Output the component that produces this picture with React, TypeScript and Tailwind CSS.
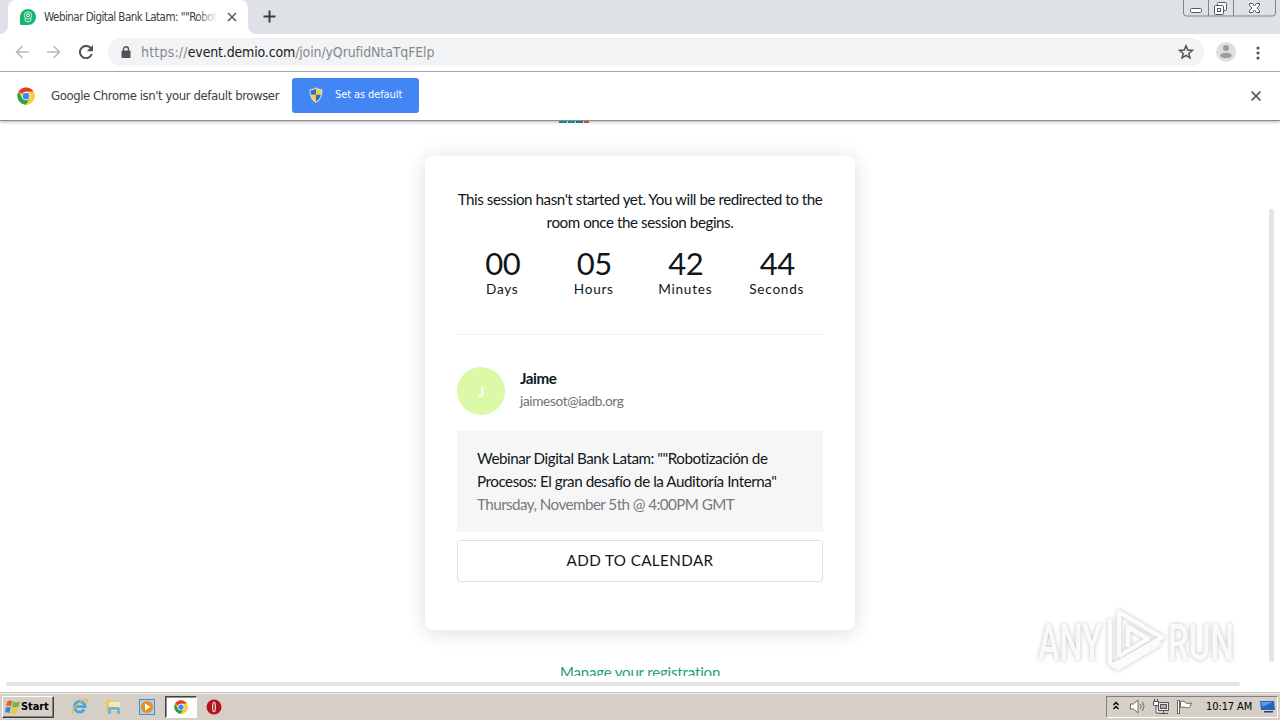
import type { ReactNode } from 'react';

const countdown = [
  { value: '00', label: 'Days' },
  { value: '05', label: 'Hours' },
  { value: '42', label: 'Minutes' },
  { value: '44', label: 'Seconds' },
];

function ChromeLogo({ className }: { className?: string }) {
  return (
    <svg className={className} viewBox="0 0 48 48">
      <circle cx="24" cy="24" r="23" fill="#fbc116" />
      <path d="M24 24 4.1 12.5A23 23 0 0 1 43.9 12.5H24z" fill="#e33b2e" />
      <path d="M4.1 12.5A23 23 0 0 0 24 47l10-17.3L24 24 14 29.7z" fill="#2aa24c" />
      <path d="M24 47A23 23 0 0 0 43.9 12.5H24L34 29.7z" fill="#fccd3a" />
      <circle cx="24" cy="24" r="11.5" fill="#fff" />
      <circle cx="24" cy="24" r="9" fill="#4285f4" />
    </svg>
  );
}

function ShieldIcon() {
  return (
    <svg className="w-[14px] h-[16px]" viewBox="0 0 14 16">
      <path d="M7 .3C5 1.800 3 2.300.5 2.300.5 8.500 1.800 13.200 7 15.800c5.200-2.600 6.500-7.300 6.500-13.500C11 2.300 9 1.800 7 .3z" fill="#d9dcd6" />
      <path d="M7 1.500C5.300 2.800 3.500 3.300 1.600 3.400c0 1.600.1 2.900.5 4.400H7z" fill="#2a6fc0" />
      <path d="M7 1.500c1.700 1.300 3.500 1.800 5.400 1.900 0 1.600-.1 2.900-.5 4.400H7z" fill="#f6cf33" />
      <path d="M2.100 7.800H7v6.700c-2.700-1.400-4.200-3.700-4.900-6.700z" fill="#f6cf33" />
      <path d="M11.900 7.800H7v6.700c2.700-1.400 4.200-3.700 4.900-6.700z" fill="#2a6fc0" />
    </svg>
  );
}

function TabStrip() {
  return (
    <div className="relative flex h-[34px] shrink-0 bg-[#dee1e6]">
      <div className="flex ml-[8px] w-[240px] h-[34px] items-center rounded-t-[8px] bg-white pl-[12px]">
        <svg className="w-4 h-4 shrink-0" viewBox="0 0 16 16">
          <path d="M8 0a8 8 0 1 1 0 16H1.500A1.500 1.500 0 0 1 0 14.500V8a8 8 0 0 1 8-8z" fill="#15b573" />
          <circle cx="8" cy="6.500" r="3.700" fill="none" stroke="#c5f0dd" strokeWidth="1" />
          <circle cx="8" cy="6.300" r="1.500" fill="none" stroke="#fff" strokeWidth="1" />
          <path d="M5.500 9.200c-3 4.800 8 4.800 5 0" fill="none" stroke="#e5f8f0" strokeWidth="1" />
        </svg>
        <div className="relative ml-[8px] w-[174px] overflow-hidden whitespace-nowrap pt-[1px] text-[11.5px] tracking-[-0.52px] text-[#3c4043]">
          Webinar Digital Bank Latam: ""Robot
          <div className="absolute inset-y-0 right-0 w-[22px] bg-gradient-to-r from-transparent to-white" />
        </div>
        <svg className="ml-[9px] w-[10px] h-[10px]" viewBox="0 0 10 10" stroke="#5f6368" strokeWidth="1.700">
          <path d="M1 1l8 8M9 1l-8 8" />
        </svg>
      </div>
      <svg className="ml-[15px] mt-[10px] w-[13px] h-[13px]" viewBox="0 0 13 13" stroke="#3c4043" strokeWidth="2">
        <path d="M6.500 .5v12M.5 6.500h12" />
      </svg>
      {/* corner flares of the active tab */}
      <svg className="absolute left-0 bottom-0 w-2 h-2" viewBox="0 0 8 8"><path d="M8 0v8H0a8 8 0 0 0 8-8z" fill="#fff" /></svg>
      <svg className="absolute left-[248px] bottom-0 w-2 h-2" viewBox="0 0 8 8"><path d="M0 0v8h8a8 8 0 0 1-8-8z" fill="#fff" /></svg>
      <svg className="absolute left-[1183px] top-0 w-[93px] h-[17px]" viewBox="0 0 93 17" fill="none" stroke="#7c8390">
        <path d="M.5 0v13a3 3 0 0 0 3 3h86a3 3 0 0 0 3-3V0M25.500 0v16M50.500 0v16" />
        <g stroke="#535966">
          <rect x="7.500" y="8.500" width="11" height="4" rx="1" fill="#fff" />
          <rect x="34.500" y="2.500" width="9" height="8" rx="1" fill="#fff" />
          <rect x="31.500" y="5.500" width="9" height="9" rx="1" fill="#fff" />
          <rect x="34.500" y="8.500" width="3" height="3" />
          <path d="M66.500 3.500h3l2 2.500 2-2.500h3v2L74 8l2.500 2.500v2h-3l-2-2.500-2 2.500h-3v-2L69 8l-2.500-2.500z" fill="#fff" />
        </g>
      </svg>
    </div>
  );
}

function Toolbar() {
  return (
    <div className="flex h-[38px] shrink-0 items-center border-b border-[#b0b2b4] bg-white">
      <svg className="ml-[15px] mb-[2px] w-[14px] h-[14px]" viewBox="0 0 14 14" fill="none" stroke="#b9bbbe" strokeWidth="1.700">
        <path d="M14 7H1.500M7.500 1l-6 6 6 6" />
      </svg>
      <svg className="ml-[18px] mb-[2px] w-[14px] h-[14px]" viewBox="0 0 14 14" fill="none" stroke="#b9bbbe" strokeWidth="1.700">
        <path d="M0 7h12.500M6.500 1l6 6-6 6" />
      </svg>
      <svg className="ml-[18px] mb-[2px] w-[14px] h-[14px]" viewBox="0 0 14 14">
        <path d="M11.800 3.200A6.100 6.100 0 1 0 12.800 9" fill="none" stroke="#505357" strokeWidth="2" />
        <path d="M14 0v6.200H7.800z" fill="#505357" />
      </svg>
      <div className="ml-[15px] mb-[1px] flex h-[28px] w-[1096px] items-center rounded-full bg-[#f1f3f4]">
        <svg className="ml-[13px] w-[10px] h-[12px]" viewBox="0 0 10 12">
          <path d="M2.500 5V3.200a2.500 2.500 0 0 1 5 0V5" fill="none" stroke="#505357" strokeWidth="1.400" />
          <rect x="0.500" y="4.500" width="9" height="7.500" rx="1" fill="#505357" />
        </svg>
        <div className="ml-[10px] whitespace-nowrap font-light text-[14px] text-[#85898e]">
          <span className="tracking-[0.2px]">https://</span>
          <span className="font-normal tracking-[-0.16px] text-[#202124]">event.demio.com</span>
          <span className="tracking-[-0.13px]">/join/yQrufidNtaTqFElp</span>
        </div>
        <svg className="ml-auto mr-[10px] w-4 h-4" viewBox="0 0 24 24" fill="none" stroke="#505357" strokeWidth="2.300">
          <path d="M12 2.800l2.600 6.400 6.900.5-5.300 4.500 1.700 6.700L12 17.200l-5.900 3.700 1.700-6.700L2.500 9.700l6.900-.5z" />
        </svg>
      </div>
      <svg className="ml-[12px] mb-[2px] w-5 h-5" viewBox="0 0 20 20">
        <circle cx="10" cy="10" r="10" fill="#dedfe1" />
        <circle cx="10" cy="6" r="3" fill="#9b9da0" />
        <ellipse cx="10" cy="13.500" rx="5.700" ry="2.800" fill="#9b9da0" />
      </svg>
      <svg className="ml-[20px] w-1 h-[14px]" viewBox="0 0 4 14" fill="#505357">
        <circle cx="2" cy="2" r="1.600" /><circle cx="2" cy="7" r="1.600" /><circle cx="2" cy="12" r="1.600" />
      </svg>
    </div>
  );
}

function InfoBar() {
  return (
    <div className="relative z-10 flex h-[49px] shrink-0 items-center border-b border-[#8e8e8e] bg-white shadow-[0_1px_3px_rgba(0,0,0,0.3)]">
      <ChromeLogo className="ml-[17px] w-[18px] h-[18px]" />
      <span className="ml-[16px] w-[241px] whitespace-nowrap text-[13px] tracking-[-0.41px] text-[#3c4043]">Google Chrome isn't your default browser</span>
      <button className="mb-[2px] flex h-[35px] w-[127px] items-center rounded-[3px] bg-[#4285f4] pl-[17px] text-[11px] text-white">
        <ShieldIcon />
        <span className="ml-[12px] whitespace-nowrap pt-[1px] tracking-[-0.1px]">Set as default</span>
      </button>
      <svg className="ml-auto mr-[19px] w-[10px] h-[10px]" viewBox="0 0 10 10" stroke="#5f6368" strokeWidth="1.900">
        <path d="M.5 .5l9 9M9.500 .5l-9 9" />
      </svg>
    </div>
  );
}

function Watermark() {
  return (
    <svg className="absolute left-[1034px] top-[486px] w-[204px] h-[66px] drop-shadow-[0_0_2px_rgba(0,0,0,0.24)]" viewBox="0 0 204 66">
      <g fill="#fafafa" fontFamily="Roboto, sans-serif" fontSize="50" fontWeight="500">
        <text x="4" y="53" textLength="64" lengthAdjust="spacingAndGlyphs">ANY</text>
        <text x="134" y="53" textLength="66" lengthAdjust="spacingAndGlyphs">RUN</text>
      </g>
      <g fill="none" stroke="#fbfbfb" strokeWidth="4.500" strokeLinejoin="round">
        <path d="M85 50V5l43 25.500L80 58M94 40V20l20 12-29 17M76 12v44l8 5 43-25" />
      </g>
    </svg>
  );
}

function SessionCard() {
  return (
    <div className="h-[474px] w-[430px] rounded-[8px] bg-white px-[32px] pt-[32px] text-[15.2px] leading-[23px] tracking-[-0.45px] text-[#10161a] shadow-[0_2px_20px_rgba(0,0,0,0.14)]">
      <p className="text-center whitespace-nowrap">
        This session hasn't started yet. You will be redirected to the
        <br />
        room once the session begins.
      </p>
      <div className="mt-[11px] grid grid-cols-4 text-center">
        {countdown.map((item) => (
          <div key={item.label}>
            <div className="text-[31px] leading-[36px] tracking-[-0.6px]">{item.value}</div>
            <div className="-ml-[1px] pt-[1px] text-[13.6px] leading-[15px] tracking-[0.75px]">{item.label}</div>
          </div>
        ))}
      </div>
      <div className="mt-[37px] border-t border-[#f1f2f3]" />
      <div className="mt-[32px] flex h-[48px]">
        <div className="flex h-[48px] w-[48px] items-center justify-center rounded-full bg-[#dcf9a8] text-[14px] font-bold text-white">J</div>
        <div className="ml-[15px]">
          <div className="font-bold leading-[23px]">Jaime</div>
          <div className="text-[13.6px] leading-[22px] tracking-[-0.35px] text-[#6c7277]">jaimesot@iadb.org</div>
        </div>
      </div>
      <div className="mt-[16px] h-[101px] bg-[#f6f6f7] px-[20px] pt-[16px]">
        <p className="whitespace-nowrap">
          Webinar Digital Bank Latam: ""Robotización de
          <br />
          Procesos: El gran desafío de la Auditoría Interna"
        </p>
        <p className="whitespace-nowrap tracking-[-0.55px] text-[#747a80]">Thursday, November 5th @ 4:00PM GMT</p>
      </div>
      <button className="mt-[8px] h-[42px] w-full rounded-[4px] border border-[#dfe0e3] pb-[2px] tracking-[0.4px]">ADD TO CALENDAR</button>
    </div>
  );
}

function TaskButton({ children }: { children: ReactNode }) {
  return <div className="flex h-[22px] w-[34px] items-center justify-center">{children}</div>;
}

function Taskbar() {
  return (
    <div className="flex h-[28px] shrink-0 items-center border-t border-[#c5c4bb] bg-[#d5cfc7] font-['DejaVu_Sans_Condensed','Noto_Sans',sans-serif] shadow-[inset_0_1px_0_#f2f0eb]">
      <button className="ml-[2px] flex h-[22px] w-[52px] items-center border border-t-white border-l-white border-r-[#404040] border-b-[#404040] pl-[2px] text-[11px] font-bold text-black shadow-[inset_-1px_-1px_0_#808080]">
        <svg className="w-[16px] h-[16px] shrink-0" viewBox="0 0 16 16">
          <path d="M2.500 2c2-.9 3.600-.7 5 .2L6 7.600c-1.700-.9-3.300-1-5-.2z" fill="#e8642c" />
          <path d="M8.500 2.600c2 1 4 1 6.500-.3l-1.500 5.300c-2 1-4 1.200-6.300.3z" fill="#76b43e" />
          <path d="M.8 8.500c1.700-.8 3.400-.7 5 .2L4.300 14c-1.500-.9-2.900-1-4.300-.3z" fill="#3c84d0" />
          <path d="M6.900 9c2 1 4.200 1 6.300-.2l-1.500 5.300c-2 1-4 1.200-6.200.2z" fill="#f6c437" />
        </svg>
        <span className="pt-[2px] tracking-[-0.1px]">Start</span>
      </button>
      <div className="ml-[8px] flex">
        <TaskButton>
          <svg className="w-[17px] h-[17px]" viewBox="0 0 17 17" fill="none">
            <path d="M13.300 11.500A5.300 5.300 0 1 1 14 8.700H5" stroke="#46a5e3" strokeWidth="2.800" />
            <path d="M2 15C-.5 12 10 1 15.500 1.500c1.200.2.900 2-.2 3.500" stroke="#e8b73a" strokeWidth="1.300" />
          </svg>
        </TaskButton>
        <TaskButton>
          <svg className="w-[17px] h-[17px]" viewBox="0 0 17 17">
            <path d="M1 2h5l1 1.500h7V14H1z" fill="#e5ca6b" />
            <path d="M4 4h11v9H4z" fill="#f8e9a8" />
            <path d="M3 16v-5q0-2 2-2h8q2 0 2 2v5h-3v-4H6v4z" fill="#6bb4dc" />
          </svg>
        </TaskButton>
        <TaskButton>
          <svg className="w-[16px] h-[16px]" viewBox="0 0 16 16">
            <rect x=".5" y=".5" width="15" height="15" fill="#a9d0ef" stroke="#4c8fc8" />
            <circle cx="8" cy="8" r="6" fill="#f28a1b" />
            <path d="M6 4.500v7L11.500 8z" fill="#fff" />
          </svg>
        </TaskButton>
        <div className="ml-[1px] flex h-[22px] w-[32px] items-center justify-center border border-t-[#404040] border-l-[#404040] border-r-white border-b-white bg-white shadow-[inset_1px_1px_0_#909090]">
          <ChromeLogo className="w-[14px] h-[14px]" />
        </div>
        <TaskButton>
          <svg className="w-[16px] h-[16px]" viewBox="0 0 16 16">
            <circle cx="8" cy="8" r="7.500" fill="#b3131a" />
            <ellipse cx="8" cy="8" rx="2" ry="5.300" fill="#f1dede" />
            <ellipse cx="8" cy="8" rx=".7" ry="4.300" fill="#8b0f15" />
          </svg>
        </TaskButton>
      </div>
      <div className="ml-auto mr-[2px] flex h-[22px] w-[172px] items-center border border-t-[#808080] border-l-[#808080] border-r-white border-b-white">
        <svg className="ml-[6px] mb-[3px] w-[6px] h-[9px]" viewBox="0 0 6 9" fill="none" stroke="#000" strokeWidth="1.300">
          <path d="M.5 4L3 1.500 5.500 4M.5 8L3 5.500 5.500 8" />
        </svg>
        <svg className="ml-[11px] w-[16px] h-[15px]" viewBox="0 0 16 15" fill="none" stroke="#6b6b6b">
          <path d="M.5 5h3L8 1v13L3.500 10h-3z" fill="#fff" />
          <path d="M10.500 5q1.500 2.500 0 5M12.500 3q3 4.500 0 9" />
        </svg>
        <svg className="ml-[7px] w-[16px] h-[16px]" viewBox="0 0 16 16" fill="none" stroke="#555">
          <rect x="5.500" y="3.500" width="10" height="8" fill="#e8e8e8" />
          <rect x="7.500" y="5.500" width="6" height="4" fill="#aaa" />
          <path d="M6 14.500h9M10.500 11.500v3" />
          <path d="M.5 2.500h5v4h-5zM1.500 0v2M4.500 0v2M3 7v7h3" fill="#fff" />
        </svg>
        <svg className="ml-[8px] w-[16px] h-[16px]" viewBox="0 0 16 16" stroke="#666">
          <path d="M3.500 2.500c3-1 4 0 6 2 1.500-.2 3-.2 5-.5-1 3-2 5-4.500 5-2-1-4-1-6.500-.5z" fill="#fff" />
          <rect x=".5" y="1.500" width="2" height="13" fill="#fff" />
        </svg>
        <span className="ml-[13px] w-[48px] whitespace-nowrap pt-[2px] text-[11px] tracking-[-0.1px] text-black">10:17 AM</span>
        <svg className="ml-[6px] w-[15px] h-[13px] shrink-0" viewBox="0 0 15 13">
          <path d="M0 1h14l1 9H1z" fill="#2364bd" />
          <path d="M1 2h12L2 7z" fill="#5b9ae2" />
          <path d="M4 11h9v1.500H4z" fill="#263d68" />
        </svg>
      </div>
    </div>
  );
}

export default function App() {
  return (
    <div className="flex h-[720px] w-[1280px] flex-col overflow-hidden bg-white font-['DejaVu_Sans_Condensed','Noto_Sans',sans-serif]">
      <TabStrip />
      <Toolbar />
      <InfoBar />
      <main className="relative flex min-h-0 flex-1 flex-col items-center overflow-hidden bg-white font-[Lato,sans-serif]">
        {/* bottom edge of the event logo, scrolled under the info bar */}
        <div className="-ml-[132px] flex h-[2px] w-[31px] shrink-0 gap-[1px]">
          <div className="w-[8px] bg-[#16a3b4]" />
          <div className="w-[7px] bg-[#16a3b4]" />
          <div className="w-[7px] bg-[#188fb0]" />
          <div className="w-[5px] bg-[#d9604a]" />
        </div>
        <div className="mt-[33px] shrink-0">
          <SessionCard />
        </div>
        <div className="mt-[31px] h-[15px] shrink-0 overflow-hidden text-[15px] leading-[23px] tracking-[-0.17px] text-[#22a377]">
          Manage your registration
        </div>
        <div className="absolute left-[6px] top-[561px] h-[4px] w-[1234px] rounded-full bg-[#e2e4ea]" />
        <div className="absolute left-[1269px] top-[88px] h-[453px] w-[5px] rounded-full bg-[#e2e4ea]" />
        <Watermark />
      </main>
      <Taskbar />
    </div>
  );
}
